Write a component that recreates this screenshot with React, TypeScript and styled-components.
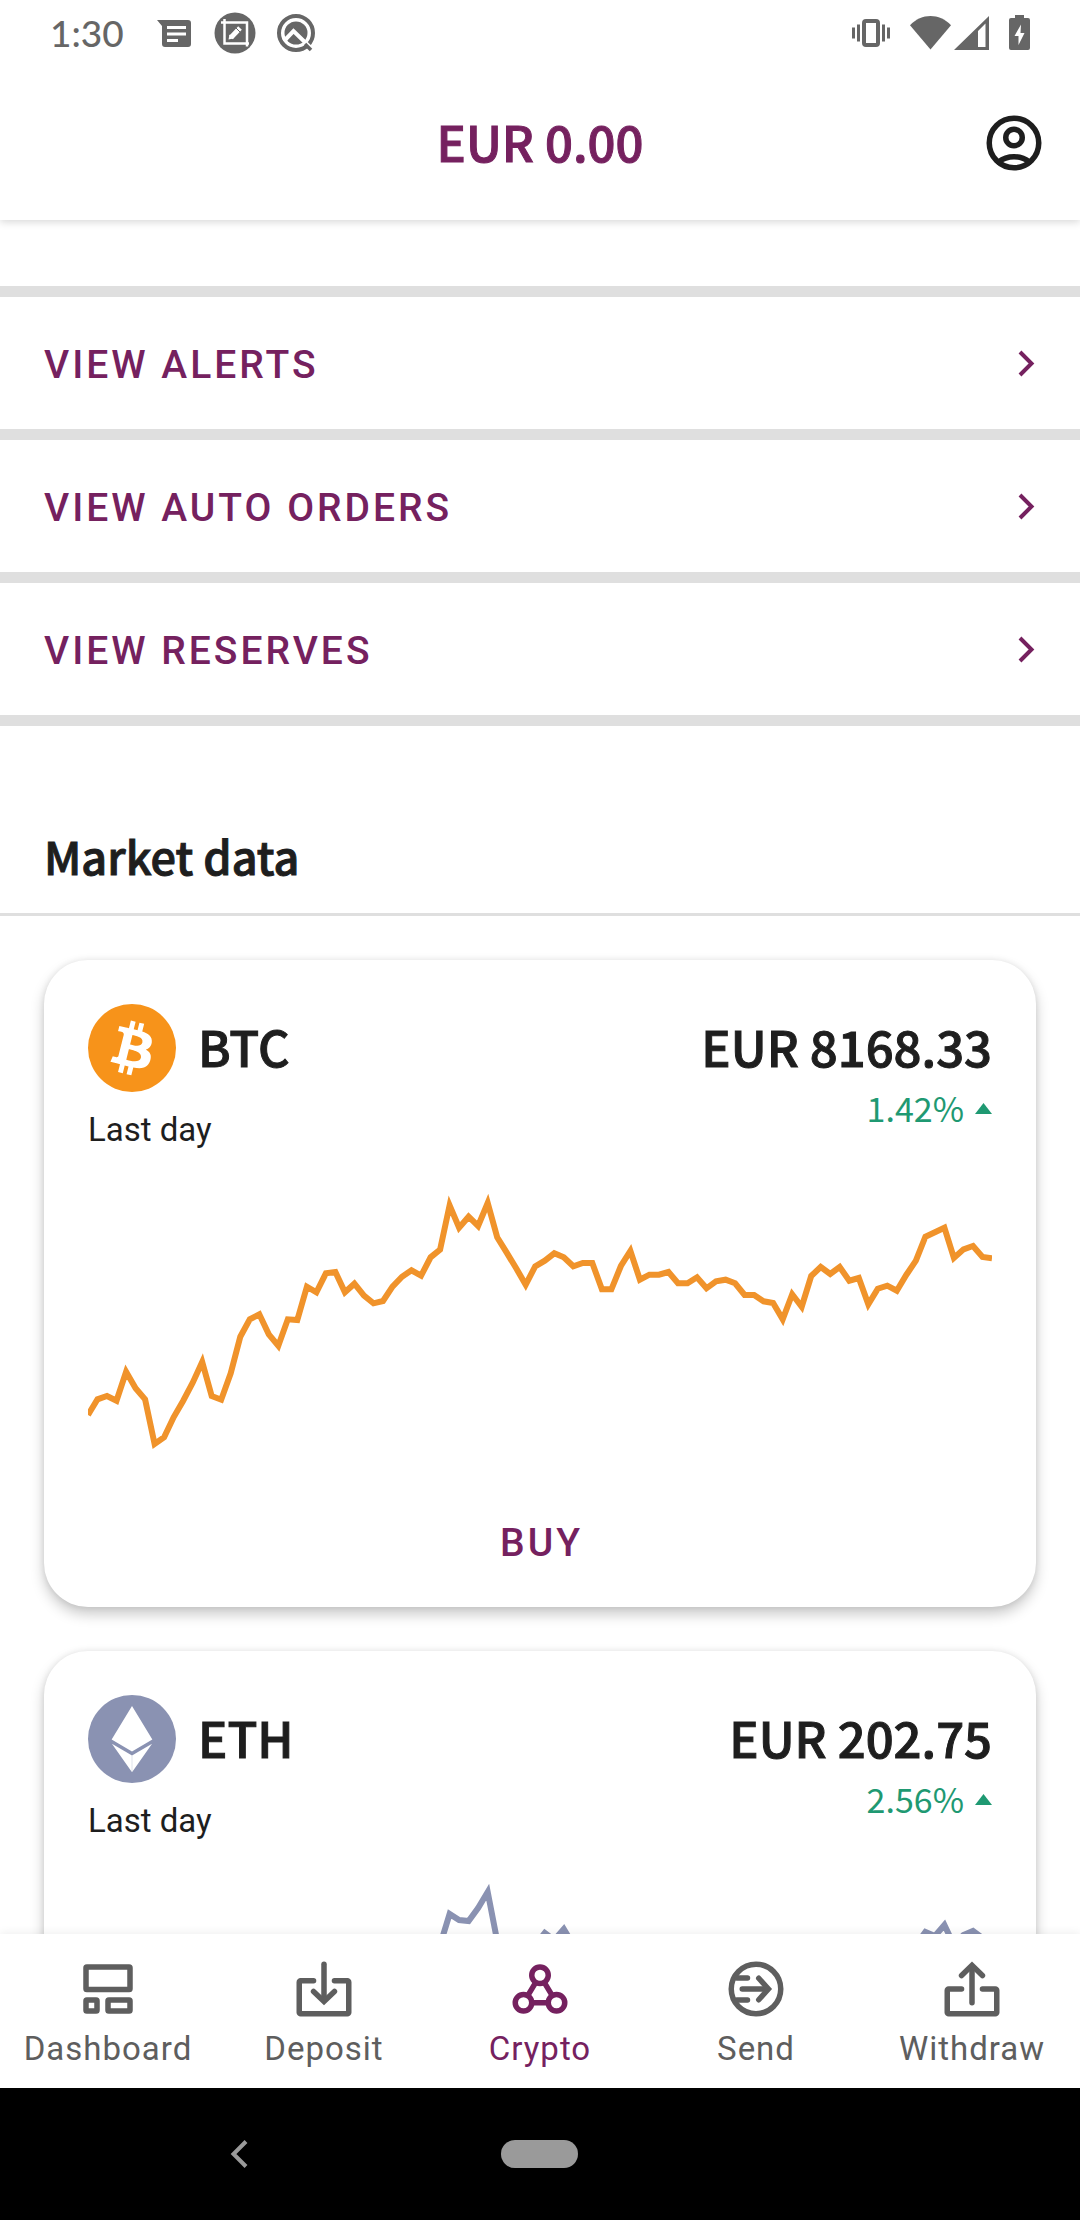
import React from "react";
import styled, { createGlobalStyle, css } from "styled-components";

const color = {
  brand: "#75215f",
  ink: "#1e1e1e",
  muted: "#5e5e5e",
  status: "#666666",
  rule: "#dfdfdf",
  up: "#1f9972",
  btc: "#f0932b",
  eth: "#8a92b2",
};

const display = '"Noto Sans CJK JP", "Noto Sans CJK SC", "Noto Sans", sans-serif';
const body = 'Roboto, "Noto Sans", sans-serif';

/* Semibold headings: the medium cut, thickened by a hairline outline. */
const heading = css<{ $size?: number }>`
  font: 500 49px/62px ${display};
  -webkit-text-stroke: 1px currentColor;
`;

const GlobalStyle = createGlobalStyle`
  * { box-sizing: border-box; }
  body { margin: 0; background: #fff; color: ${color.ink}; font-family: ${body}; }
  h1, h2, h3, p { margin: 0; }
  svg { display: block; flex: none; }
  button { border: 0; padding: 0; background: none; font: inherit; color: inherit; cursor: pointer; }
`;

const Shell = styled.div`
  display: flex;
  flex-direction: column;
  height: 100vh;
  overflow: hidden;
`;

const StatusBar = styled.div`
  display: flex;
  align-items: center;
  justify-content: space-between;
  height: 66px;
  padding: 0 50px;
  color: ${color.status};
`;

const StatusGroup = styled.div<{ $gap: number }>`
  display: flex;
  align-items: center;
  gap: ${(p) => p.$gap}px;
`;

const Clock = styled.time`
  font: 500 37px/48px Lato, sans-serif;
  margin-right: 10px;
`;

const Header = styled.header`
  position: relative;
  z-index: 1;
  flex: none;
  background: #fff;
  box-shadow: 0 2px 8px rgba(0, 0, 0, 0.16);
`;

const TitleBar = styled.div`
  display: grid;
  grid-template-columns: 66px 1fr 66px;
  align-items: center;
  height: 154px;
  padding: 0 33px;
`;

const Balance = styled.h1`
  ${heading}
  grid-column: 2;
  padding-bottom: 4px;
  text-align: center;
  color: ${color.brand};
`;

const Content = styled.main`
  flex: 1;
  min-height: 0;
  overflow-y: auto;
  scrollbar-width: none;
  padding: 66px 0 44px;
`;

const LinkList = styled.nav`
  border-top: 11px solid ${color.rule};
`;

const LinkRow = styled.a`
  display: flex;
  align-items: center;
  justify-content: space-between;
  height: 143px;
  padding: 4px 44px 0;
  border-bottom: 11px solid ${color.rule};
  color: ${color.brand};
  font: 500 39px/48px ${body};
  letter-spacing: 3px;
  text-decoration: none;
`;

const SectionTitle = styled.h2`
  ${heading}
  padding: 97px 44px 24px;
  border-bottom: 3px solid ${color.rule};
  font-size: 45px;
  line-height: 66px;
`;

const Cards = styled.div`
  display: flex;
  flex-direction: column;
  gap: 44px;
  padding: 44px;
`;

const Card = styled.article`
  padding: 44px 44px 31px;
  border-radius: 44px;
  background: #fff;
  box-shadow: 0 7px 14px rgba(0, 0, 0, 0.22), 0 0 6px rgba(0, 0, 0, 0.08);
`;

const CardHead = styled.div`
  display: flex;
  justify-content: space-between;
`;

const Asset = styled.div`
  display: flex;
  align-items: center;
  gap: 22px;
  height: 88px;
`;

const Figure = styled.h3`
  ${heading}
  padding-bottom: 4px;
`;

const Period = styled.p`
  margin-top: 16px;
  font: 400 33px/44px ${body};
`;

const Quote = styled.div`
  display: flex;
  flex-direction: column;
  align-items: flex-end;
  padding-top: 11px;
`;

const Change = styled.p`
  display: flex;
  align-items: center;
  gap: 11px;
  color: ${color.up};
  font: 400 34px/54px ${display};
`;

const ChartBox = styled.svg`
  width: 100%;
  height: 264px;
  margin-top: 40px;
`;

const BuyButton = styled.button`
  display: block;
  width: 100%;
  margin-top: 54px;
  padding-left: 3px;
  color: ${color.brand};
  font: 500 39px/66px ${body};
  letter-spacing: 3px;
`;

const TabBar = styled.nav`
  position: relative;
  z-index: 1;
  flex: none;
  display: grid;
  grid-template-columns: repeat(5, 1fr);
  height: 154px;
  padding-top: 22px;
  background: #fff;
  box-shadow: 0 -2px 8px rgba(0, 0, 0, 0.06);
`;

const Tab = styled.a<{ $active: boolean }>`
  display: flex;
  flex-direction: column;
  align-items: center;
  gap: 5px;
  color: ${(p) => (p.$active ? color.brand : color.muted)};
  font: 400 33px/44px ${body};
  letter-spacing: 1px;
  text-decoration: none;
`;

const SystemNav = styled.div`
  flex: none;
  display: grid;
  grid-template-columns: repeat(3, 1fr);
  place-items: center;
  height: 132px;
  padding: 0 88px;
  background: #000;
  color: #9a9a9a;
`;

const HomePill = styled.button`
  width: 77px;
  height: 28px;
  border-radius: 14px;
  background: #9a9a9a;
`;

const LineIcon = ({ children }: { children: React.ReactNode }) => (
  <svg width="66" height="66" viewBox="0 0 24 24" fill="none" stroke="currentColor" strokeWidth="2" strokeLinecap="round" strokeLinejoin="round" aria-hidden="true">
    {children}
  </svg>
);

const ProfileIcon = () => (
  <LineIcon>
    <circle cx="12" cy="12" r="9" />
    <circle cx="12" cy="10" r="3" />
    <path d="M6.4 18.9C8 17.6 9.9 17 12 17s4 .6 5.600 1.900" />
  </LineIcon>
);

const tabs = [
  {
    label: "Dashboard",
    icon: (
      <>
        <rect x="4" y="4" width="16" height="8.200" rx=".3" />
        <rect x="4" y="16" width="4" height="4" rx=".3" />
        <rect x="12" y="16" width="8" height="4" rx=".3" />
      </>
    ),
  },
  {
    label: "Deposit",
    icon: (
      <>
        <path d="M8.200 9H3.500a.5.5 0 0 0-.5.5v11a.5.5 0 0 0 .5.5h17a.5.5 0 0 0 .5-.5v-11a.5.5 0 0 0-.5-.5h-4.700" />
        <path d="M12 3v13" />
        <path d="M8.200 12.900 12 16.500l3.800-3.600" strokeLinejoin="miter" />
      </>
    ),
  },
  {
    label: "Crypto",
    active: true,
    icon: (
      <>
        <circle cx="12" cy="7" r="3" />
        <circle cx="6" cy="17" r="3" />
        <circle cx="18" cy="17" r="3" />
        <path d="M10.400 9.700 7.600 14.300M13.600 9.700l2.800 4.600M9 17h6" />
      </>
    ),
  },
  {
    label: "Send",
    icon: (
      <>
        <circle cx="12" cy="12" r="9" />
        <path d="M5 8h3.900M7 12h9M5 16h3.900" />
        <path d="M13 8.100 16.500 12 13 15.900" strokeLinejoin="miter" />
      </>
    ),
  },
  {
    label: "Withdraw",
    icon: (
      <>
        <path d="M8.200 12H3.500a.5.5 0 0 0-.5.5v8a.5.5 0 0 0 .5.5h17a.5.5 0 0 0 .5-.5v-8a.5.5 0 0 0-.5-.5h-4.700" />
        <path d="M12 17V4" />
        <path d="M8.200 7.100 12 3.400l3.800 3.700" strokeLinejoin="miter" />
      </>
    ),
  },
];

const Bitcoin = () => (
  <svg width="88" height="88" viewBox="0 0 32 32" aria-hidden="true">
    <circle cx="16" cy="16" r="16" fill="#f7931a" />
    <path
      fill="#fff"
      d="M23.189 14.02c.314-2.096-1.283-3.223-3.465-3.975l.708-2.84-1.728-.43-.69 2.765c-.454-.114-.92-.22-1.385-.326l.695-2.783L15.596 6l-.708 2.839c-.376-.086-.746-.17-1.104-.26l.002-.009-2.384-.595-.46 1.846s1.283.294 1.256.312c.7.175.826.638.805 1.006l-.806 3.235c.048.012.11.03.18.057l-.183-.045-1.13 4.532c-.086.212-.303.531-.793.41.018.025-1.256-.313-1.256-.313l-.858 1.978 2.25.561c.418.105.828.215 1.231.318l-.715 2.872 1.727.43.708-2.84c.472.127.93.245 1.378.357l-.706 2.828 1.728.43.715-2.866c2.948.558 5.164.333 6.097-2.333.752-2.146-.037-3.385-1.588-4.192 1.13-.26 1.98-1.003 2.207-2.538zm-3.95 5.538c-.533 2.147-4.148.986-5.32.695l.95-3.805c1.172.293 4.929.872 4.37 3.11zm.535-5.569c-.487 1.953-3.495.96-4.47.717l.86-3.45c.975.243 4.118.696 3.61 2.733z"
    />
  </svg>
);

const Ethereum = () => (
  <svg width="88" height="88" viewBox="0 0 32 32" aria-hidden="true">
    <circle cx="16" cy="16" r="16" fill={color.eth} />
    <path fill="#fff" d="M16 4l7.400 12.200L16 20.500l-7.400-4.300zM8.700 17.700 16 22l7.300-4.300L16 28.100z" />
    <path stroke={color.eth} strokeWidth=".1" d="M16 22v6" />
  </svg>
);

/* 15-minute samples over one day, as distances below the top of the plot. */
const btcDay = [
  765, 718, 708, 722, 635, 685, 718, 852, 832, 772, 722, 668, 606, 708, 719, 640, 530, 478, 463, 523, 557, 478, 480, 380,
  397, 340, 336, 397, 371, 407, 430, 423, 380, 350, 331, 347, 292, 269, 136, 203, 170, 198, 129, 232, 278, 325, 374, 319,
  302, 280, 292, 319, 309, 309, 388, 388, 318, 273, 359, 344, 344, 336, 370, 370, 352, 385, 364, 359, 370, 405, 405, 424,
  429, 478, 403, 440, 348, 321, 342, 321, 362, 354, 433, 386, 377, 392, 344, 302, 230, 217, 203, 294, 268, 258, 291, 295,
].map((v) => v / 3 - 32);

const ethDay = [
  190, 182, 178, 180, 160, 170, 182, 226, 220, 205, 190, 175, 160, 188, 192, 170, 150, 128, 120, 140, 150, 128, 126, 100,
  104, 92, 90, 102, 96, 104, 110, 108, 98, 90, 86, 90, 80, 62, 31, 37, 38, 25, 9, 58, 66, 72, 78, 62,
  50, 57, 46, 62, 70, 70, 84, 84, 72, 66, 80, 78, 78, 76, 84, 84, 80, 86, 82, 80, 84, 92, 92, 96,
  98, 110, 92, 98, 80, 74, 78, 74, 82, 80, 96, 86, 84, 88, 76, 62, 49, 53, 42, 62, 52, 48, 55, 57,
];

const Chart = ({ points, stroke, label }: { points: number[]; stroke: string; label: string }) => (
  <ChartBox viewBox="0 0 904 264" preserveAspectRatio="none" role="img" aria-label={label}>
    <polyline
      points={points.map((y, i) => `${((i * 904) / (points.length - 1)).toFixed(1)},${y.toFixed(1)}`).join(" ")}
      fill="none"
      stroke={stroke}
      strokeWidth="6"
      strokeMiterlimit="10"
      vectorEffect="non-scaling-stroke"
    />
  </ChartBox>
);

const links = ["VIEW ALERTS", "VIEW AUTO ORDERS", "VIEW RESERVES"];

const assets = [
  { symbol: "BTC", price: "EUR 8168.33", change: "1.42%", stroke: color.btc, points: btcDay, logo: <Bitcoin />, buyable: true },
  { symbol: "ETH", price: "EUR 202.75", change: "2.56%", stroke: color.eth, points: ethDay, logo: <Ethereum />, buyable: false },
];

const StatusIcons = () => (
  <StatusBar>
    <StatusGroup $gap={19}>
      <Clock>1:30</Clock>
      <svg width="42" height="42" viewBox="0 0 42 42" fill="currentColor" aria-hidden="true">
        <path d="M4 8h31a3 3 0 0 1 3 3v21a3 3 0 0 1-3 3H12a3 3 0 0 1-3-3V14z" />
        <path stroke="#fff" strokeWidth="3" d="M14 15.500h19M14 22h19M14 28.500h11" />
      </svg>
      <svg width="42" height="42" viewBox="0 0 42 42" fill="none" aria-hidden="true">
        <circle cx="21" cy="21" r="20.500" fill="currentColor" />
        <path stroke="#fff" strokeWidth="2.500" d="M7 10.500h26v24M10.500 7v24.500h24.500" />
        <path stroke="#fff" strokeWidth="5" d="M17 25.500 26 16" />
        <path fill="#fff" d="M14.500 27.500l1-5 4 4z" />
        <path stroke="currentColor" strokeWidth="1" d="M22 16l4 4" />
      </svg>
      <svg width="42" height="42" viewBox="0 0 42 42" fill="none" stroke="currentColor" aria-hidden="true">
        <circle cx="21" cy="21" r="17" strokeWidth="4" />
        <circle cx="21" cy="21" r="11.500" fill="currentColor" stroke="none" />
        <path strokeWidth="4" d="M9 29 18.500 19 38 38" stroke="#fff" />
        <path strokeWidth="3.500" d="M30 32l6 6" />
      </svg>
    </StatusGroup>
    <StatusGroup $gap={20}>
      <svg width="38" height="42" viewBox="0 0 38 42" fill="none" stroke="currentColor" aria-hidden="true">
        <rect x="12" y="9" width="14" height="24" rx="2" strokeWidth="4" />
        <path strokeWidth="3" d="M1.500 15.500v11M6.500 12.500v17M31.500 12.500v17M36.500 15.500v11" />
      </svg>
      <StatusGroup $gap={3}>
        <svg width="41" height="36" viewBox="0 0 42 36" fill="currentColor" aria-hidden="true">
          <path d="M0 10C12-2.500 30-2.500 42 10L21 35z" />
        </svg>
        <svg width="35" height="36" viewBox="0 0 35 36" fill="currentColor" aria-hidden="true">
          <path fillRule="evenodd" d="M35 1v34H0zM24 16v16h7.500V8.500z" />
        </svg>
      </StatusGroup>
      <svg width="21" height="36" viewBox="0 0 21 36" fill="currentColor" aria-hidden="true">
        <path d="M6 0h9v3h4a2 2 0 0 1 2 2v28a2 2 0 0 1-2 2H2a2 2 0 0 1-2-2V5a2 2 0 0 1 2-2h4z" />
        <path fill="#fff" d="M12 9.500 5.500 21H9.500v9L15.500 18h-4z" />
      </svg>
    </StatusGroup>
  </StatusBar>
);

export default function App() {
  return (
    <Shell>
      <GlobalStyle />
      <Header>
        <StatusIcons />
        <TitleBar>
          <Balance>EUR 0.00</Balance>
          <button aria-label="Profile">
            <ProfileIcon />
          </button>
        </TitleBar>
      </Header>

      <Content>
        <LinkList aria-label="Crypto shortcuts">
          {links.map((text) => (
            <LinkRow href="#" key={text}>
              {text}
              <svg width="22" height="33" viewBox="0 0 22 33" fill="none" stroke="currentColor" strokeWidth="4" aria-hidden="true">
                <path d="M6 3l11.500 11.500L6 26" />
              </svg>
            </LinkRow>
          ))}
        </LinkList>

        <SectionTitle>Market data</SectionTitle>
        <Cards>
          {assets.map((a) => (
            <Card key={a.symbol}>
              <CardHead>
                <div>
                  <Asset>
                    {a.logo}
                    <Figure>{a.symbol}</Figure>
                  </Asset>
                  <Period>Last day</Period>
                </div>
                <Quote>
                  <Figure as="p">{a.price}</Figure>
                  <Change>
                    {a.change}
                    <svg width="17" height="11" viewBox="0 0 17 11" fill="currentColor" aria-hidden="true">
                      <path d="M8.500 0 17 11H0z" />
                    </svg>
                  </Change>
                </Quote>
              </CardHead>
              <Chart points={a.points} stroke={a.stroke} label={`${a.symbol} price over the last day`} />
              {a.buyable && <BuyButton>BUY</BuyButton>}
            </Card>
          ))}
        </Cards>
      </Content>

      <TabBar aria-label="Main">
        {tabs.map((t) => (
          <Tab href="#" key={t.label} $active={Boolean(t.active)} aria-current={t.active ? "page" : undefined}>
            <LineIcon>{t.icon}</LineIcon>
            {t.label}
          </Tab>
        ))}
      </TabBar>

      <SystemNav>
        <button aria-label="Back">
          <svg width="18" height="28" viewBox="0 0 18 28" fill="none" stroke="currentColor" strokeWidth="4">
            <path d="M16 1.500 3.500 14 16 26.500" />
          </svg>
        </button>
        <HomePill aria-label="Home" />
      </SystemNav>
    </Shell>
  );
}
